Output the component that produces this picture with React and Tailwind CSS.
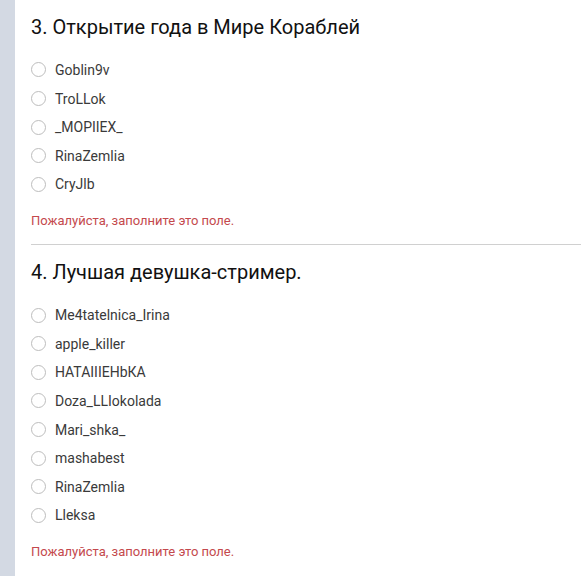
import React from "react";

const sections = [
  {
    title: "3. Открытие года в Мире Кораблей",
    options: ["Goblin9v", "TroLLok", "_MOPIIEX_", "RinaZemlia", "CryJlb"],
  },
  {
    title: "4. Лучшая девушка-стример.",
    options: [
      "Me4tatelnica_Irina",
      "apple_killer",
      "НАТАIIIЕНbКА",
      "Doza_LLIokolada",
      "Mari_shka_",
      "mashabest",
      "RinaZemlia",
      "Lleksa",
    ],
  },
];

const Option = ({ label }) => (
  <label className="flex items-center h-[28.6px] cursor-pointer">
    <span className="w-[15px] h-[15px] rounded-full border border-[#bdbdbd] bg-white shrink-0" />
    <span className="ml-[9px] text-[14px] text-[#3a3a3a] leading-none">{label}</span>
  </label>
);

const Question = ({ title, options, last }) => (
  <div>
    <h2 className="text-[20px] leading-7 text-[#111] h-7">{title}</h2>
    <div className="mt-[14.7px]">
      {options.map((o, i) => (
        <Option key={i} label={o} />
      ))}
    </div>
    <p className="mt-[13.5px] text-[13px] leading-[18px] text-[#c4494d]">
      Пожалуйста, заполните это поле.
    </p>
    {!last && <div className="mt-[14px] h-px bg-[#d0d0d0]" />}
  </div>
);

export default function App() {
  return (
    <div
      className="flex w-[581px] h-[576px] bg-white overflow-hidden"
      style={{ fontFamily: "Roboto, 'Noto Sans', sans-serif" }}
    >
      <div className="w-[15px] bg-[#d3d9e3] shrink-0" />
      <div className="flex-1 pl-4 pt-[13px] flex flex-col gap-[13px]">
        {sections.map((s, i) => (
          <Question key={i} {...s} last={i === sections.length - 1} />
        ))}
      </div>
    </div>
  );
}
